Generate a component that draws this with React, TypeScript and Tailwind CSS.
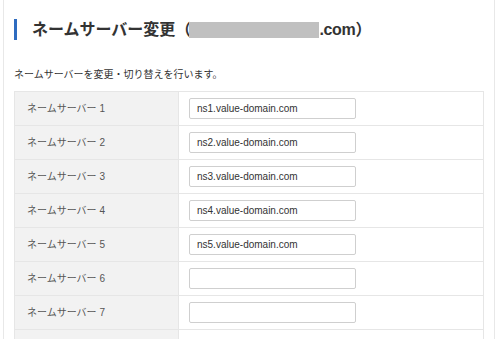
import React from "react";

const servers = [
  "ns1.value-domain.com",
  "ns2.value-domain.com",
  "ns3.value-domain.com",
  "ns4.value-domain.com",
  "ns5.value-domain.com",
  "",
  "",
];

export default function App() {
  return (
    <div className="w-[500px] h-[339px] overflow-hidden bg-white font-['Liberation_Sans','Noto_Sans_CJK_JP',sans-serif] text-[#333]">
      <div className="ml-[3px] w-[492px] h-full border-x border-[#e8e8e8] px-[10px]">
        {/* 見出し */}
        <div className="flex items-center pt-[19px]">
          <div className="w-[3px] h-[21px] bg-[#2f6cc0]" />
          <h1 className="ml-[15px] flex items-center text-[16px] font-bold leading-none text-[#333]">
            <span>ネームサーバー変更（</span>
            <span className="inline-block w-[130px] h-[16px] bg-[#c0c0c0] -ml-[2px]" />
            <span className="tracking-[-0.3px]">.com）</span>
          </h1>
        </div>

        <p className="mt-[28px] text-[10px] leading-[14px]">
          ネームサーバーを変更・切り替えを行います。
        </p>

        {/* ネームサーバー一覧 */}
        <div className="mt-[9px] border-t border-x border-[#e6e6e6]">
          {servers.map((ns, i) => (
            <div key={i} className="flex h-[34px] border-b border-[#e6e6e6]">
              <div className="w-[164px] shrink-0 flex items-center pl-[12px] bg-[#f2f2f2] border-r border-[#e6e6e6] text-[10px] text-[#555]">
                ネームサーバー {i + 1}
              </div>
              <div className="flex items-center pl-[10px]">
                <input
                  readOnly
                  value={ns}
                  className="w-[167px] h-[21px] border border-[#cfcfcf] rounded-[2px] px-[7px] text-[10px] text-[#333] outline-none bg-white"
                />
              </div>
            </div>
          ))}
          {/* 8行目（画面外に続く） */}
          <div className="flex h-[34px]">
            <div className="w-[164px] shrink-0 bg-[#f2f2f2] border-r border-[#e6e6e6]" />
          </div>
        </div>
      </div>
    </div>
  );
}
